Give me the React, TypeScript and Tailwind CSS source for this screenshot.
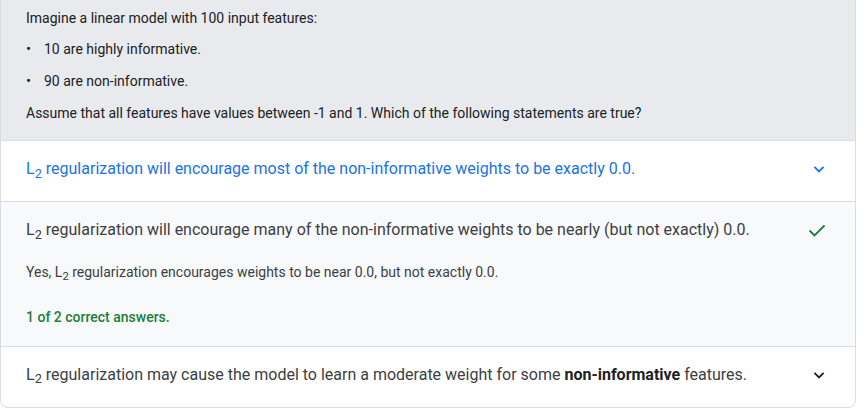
import React from "react";

const Chevron = ({ className }: { className: string }) => (
  <svg viewBox="0 0 24 24" className={className} fill="none" stroke="currentColor" strokeWidth={2.2}>
    <path d="M6.5 9.5l5.5 5.5 5.5-5.5" />
  </svg>
);

const Check = () => (
  <svg viewBox="0 0 24 24" className="w-[24px] h-[24px] text-[#188038]" fill="none" stroke="currentColor" strokeWidth={1.8}>
    <path d="M4.5 12.5l5 5 10-10" />
  </svg>
);

const L2 = () => (
  <>
    L<sub className="text-[0.8em] relative top-[0.3em] align-baseline">2</sub>
  </>
);

export default function App() {
  return (
    <div className="w-[856px] font-['Roboto',sans-serif] bg-white">
      <div className="border border-t-0 border-[#dadce0] rounded-b-[8px] overflow-hidden">
        <div className="bg-[#e8eaed] px-[25px] pt-[9px] pb-[18px] text-[14px] text-[#202124] leading-[18px]">
          <p>Imagine a linear model with 100 input features:</p>
          <ul className="mt-[13px] flex flex-col gap-[14px]">
            <li className="flex">
              <span className="w-[18px] text-[15px]">•</span>10 are highly informative.
            </li>
            <li className="flex">
              <span className="w-[18px] text-[15px]">•</span>90 are non-informative.
            </li>
          </ul>
          <p className="mt-[14px]">
            Assume that all features have values between -1 and 1. Which of the following statements are true?
          </p>
        </div>

        <div className="border-t border-[#dadce0] flex items-center justify-between pl-[25px] pr-[26px] pb-[4px] h-[61px] text-[16px] text-[#1a73e8]">
          <span>
            <L2 /> regularization will encourage most of the non-informative weights to be exactly 0.0.
          </span>
          <Chevron className="w-[20px] h-[20px] text-[#1a73e8]" />
        </div>

        <div className="border-t border-[#dadce0] bg-[#f8f9fa] pl-[25px] pr-[26px] pt-[16px] pb-[19px]">
          <div className="flex items-center justify-between text-[16px] leading-[24px] text-[#3c4043]">
            <span>
              <L2 /> regularization will encourage many of the non-informative weights to be nearly (but not exactly) 0.0.
            </span>
            <Check />
          </div>
          <p className="mt-[20px] text-[14px] leading-[20px] text-[#3c4043]">
            Yes, <L2 /> regularization encourages weights to be near 0.0, but not exactly 0.0.
          </p>
          <p className="mt-[25px] text-[14px] leading-[20px] font-medium text-[#188038]">1 of 2 correct answers.</p>
        </div>

        <div className="border-t border-[#dadce0] flex items-center justify-between pl-[25px] pr-[26px] pb-[5px] h-[61px] text-[16px] text-[#3c4043]">
          <span>
            <L2 /> regularization may cause the model to learn a moderate weight for some{" "}
            <b className="font-bold text-[#202124]">non-informative</b> features.
          </span>
          <Chevron className="w-[20px] h-[20px] text-[#202124]" />
        </div>
      </div>
    </div>
  );
}
